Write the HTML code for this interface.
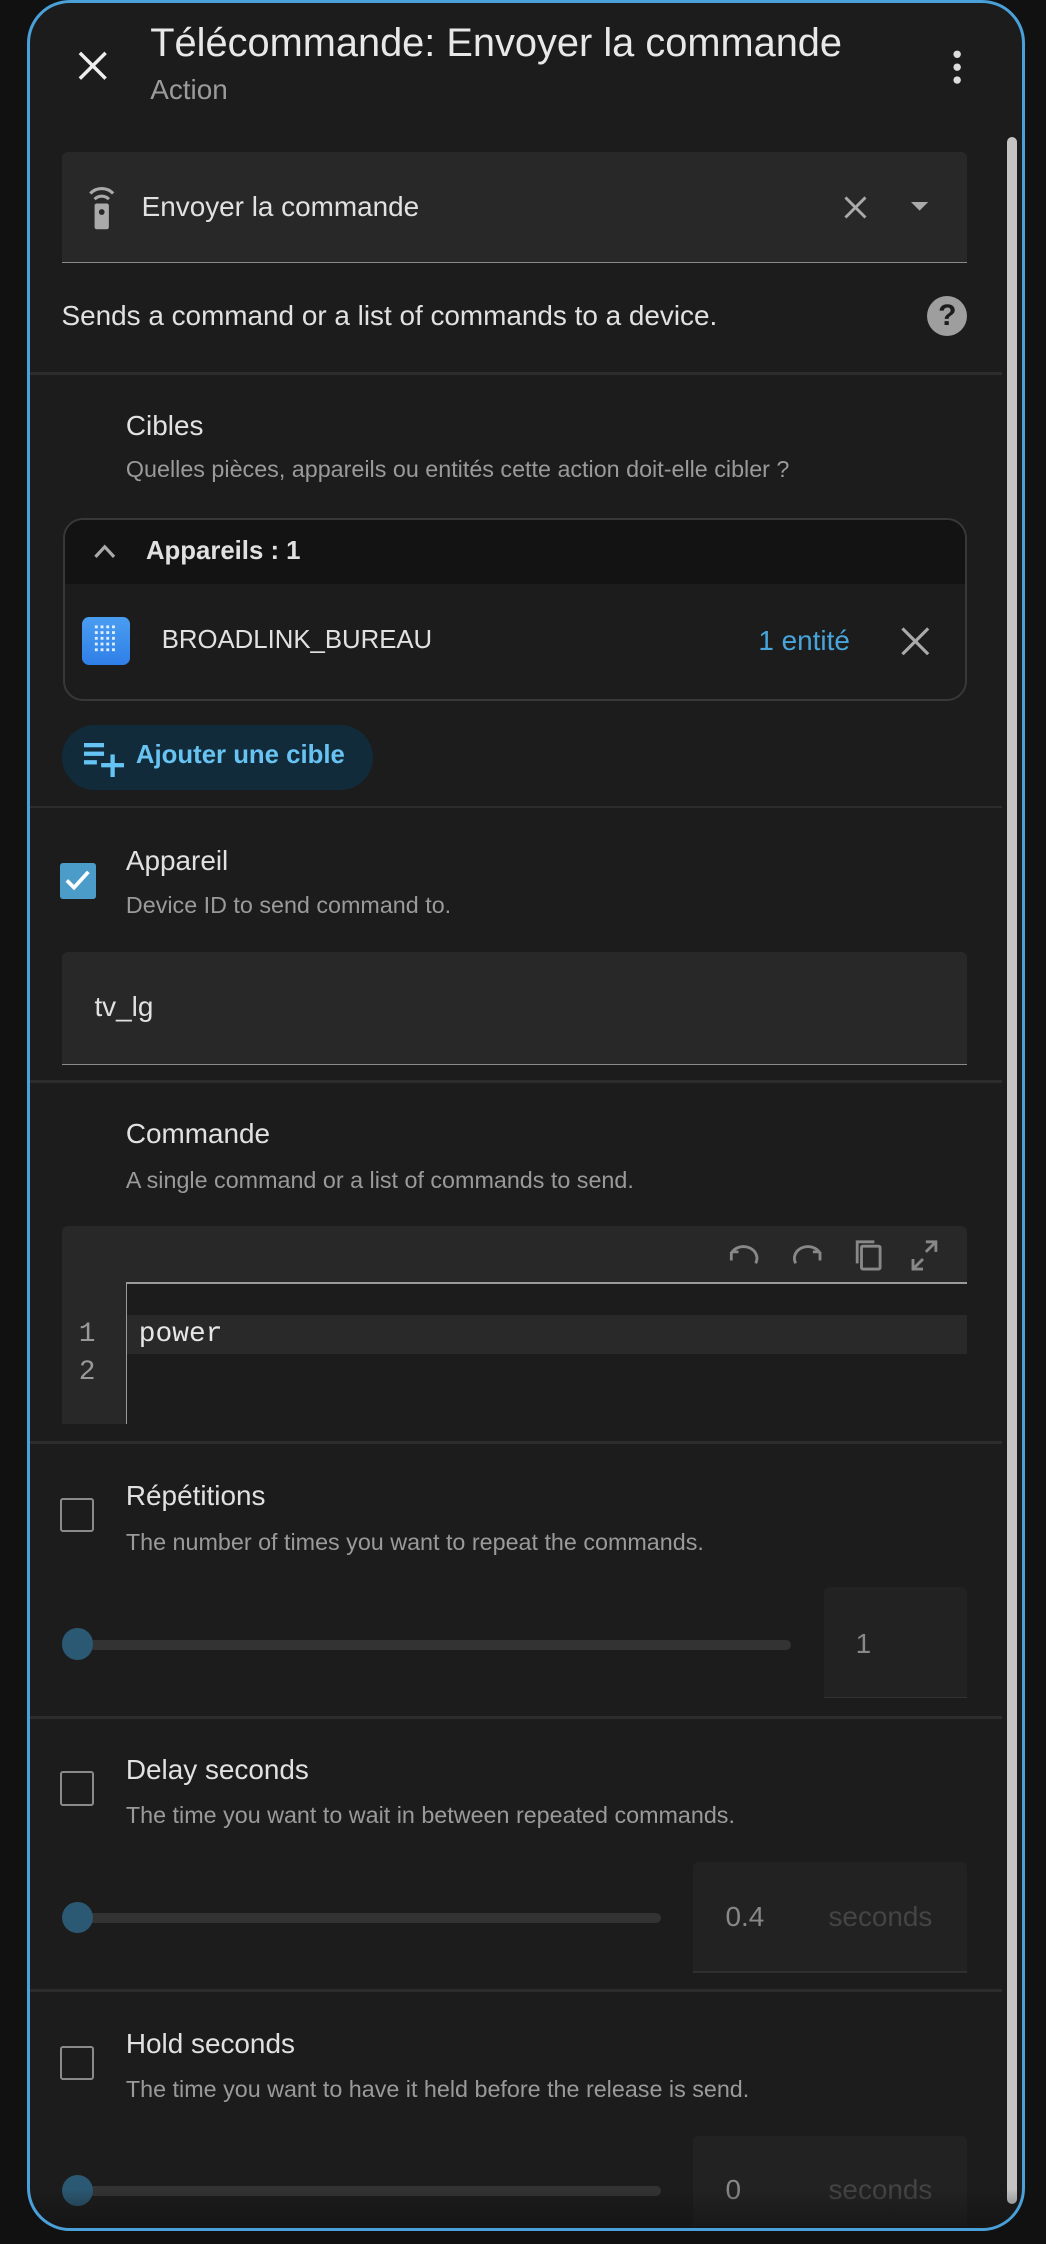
<!DOCTYPE html>
<html><head><meta charset="utf-8"><style>
html,body{margin:0;padding:0;background:#111;width:1046px;height:2244px;overflow:hidden}
#w{zoom:1.43091;width:731px;height:1568px;position:relative;font-family:"Liberation Sans",sans-serif;color:#e1e1e1}
.a{position:absolute}
.dlg{left:19px;top:0px;width:697px;height:1559px;border:2.5px solid #4aa0d8;border-radius:30px;background:#1c1c1c;box-sizing:border-box}
.t{font-size:19.5px;line-height:1;white-space:nowrap}
.s{font-size:16.3px;color:#9a9a9a;line-height:1;white-space:nowrap}
.hr{left:21px;width:679px;height:2px;background:#2c2c2c}
.fld{background:#282828;border-radius:4px 4px 0 0;border-bottom:1px solid #8a8a8a;box-sizing:border-box}
.cb{width:21px;height:21px;border:2px solid #8a8a8a;border-radius:2px}
.trk{height:7px;background:#333;border-radius:4px}
.th{width:22px;height:22px;border-radius:50%;background:#2b5872}
</style></head><body><div id="w">
<div class="a dlg"></div>
<div class="a" style="left:704px;top:96px;width:7px;height:1444px;background:#c4c4c4;border-radius:4px"></div>
<svg class="a" style="left:54px;top:35px" width="22" height="22" viewBox="0 0 22 22"><path d="M2 2L20 20M20 2L2 20" stroke="#eee" stroke-width="2.4"/></svg>
<div class="a t" style="left:105px;top:17px;font-size:27.8px;color:#e8e8e8">Télécommande: Envoyer la commande</div>
<div class="a t" style="left:105px;top:53px;color:#9b9b9b">Action</div>
<svg class="a" style="left:664px;top:35px" width="10" height="24"><circle cx="5" cy="3" r="2.6" fill="#ddd"/><circle cx="5" cy="12" r="2.6" fill="#ddd"/><circle cx="5" cy="21" r="2.6" fill="#ddd"/></svg>

<div class="a fld" style="left:43px;top:106px;width:633px;height:78px"></div>
<svg class="a" style="left:60px;top:127px" width="22" height="34" viewBox="0 0 22 34"><path d="M3 8a11 11 0 0 1 16 0M6 12a7 7 0 0 1 10 0" stroke="#aaa" stroke-width="2.2" fill="none"/><rect x="6" y="15" width="10" height="18" rx="1.5" fill="#aaa"/><circle cx="11" cy="21" r="2" fill="#282828"/></svg>
<div class="a t" style="left:99px;top:135px">Envoyer la commande</div>
<svg class="a" style="left:590px;top:137px" width="16" height="16"><path d="M1 1L15 15M15 1L1 15" stroke="#aaa" stroke-width="2"/></svg>
<svg class="a" style="left:637px;top:141px" width="12" height="7"><path d="M0 0H12L6 6Z" fill="#aaa"/></svg>
<div class="a t" style="left:43px;top:211px">Sends a command or a list of commands to a device.</div>
<div class="a" style="left:648px;top:207px;width:28px;height:28px;border-radius:50%;background:#9e9e9e;color:#1c1c1c;font-weight:bold;font-size:21px;text-align:center;line-height:28px">?</div>
<div class="a hr" style="top:260px"></div>

<div class="a t" style="left:88px;top:288px">Cibles</div>
<div class="a s" style="left:88px;top:320px">Quelles pièces, appareils ou entités cette action doit-elle cibler ?</div>
<div class="a" style="left:44px;top:362px;width:632px;height:128px;border:2px solid #383838;border-radius:14px;box-sizing:border-box;overflow:hidden"><div style="height:45px;background:#131313"></div></div>
<svg class="a" style="left:66px;top:380px" width="15" height="10"><path d="M1 9L7.5 2L14 9" stroke="#aaa" stroke-width="2.2" fill="none"/></svg>
<div class="a t" style="left:102px;top:377px;font-weight:bold;font-size:18px">Appareils : 1</div>
<div class="a" style="left:57px;top:431px;width:34px;height:34px;border-radius:5px;background:linear-gradient(#4a9ef0,#2f7fe8)"></div>
<svg class="a" style="left:64px;top:436px" width="20" height="24"><g fill="#dfefff"><rect x="2" y="1" width="2" height="2"/><rect x="6" y="1" width="2" height="2"/><rect x="10" y="1" width="2" height="2"/><rect x="14" y="1" width="2" height="2"/><rect x="2" y="5" width="2" height="2"/><rect x="6" y="5" width="2" height="2"/><rect x="10" y="5" width="2" height="2"/><rect x="14" y="5" width="2" height="2"/><rect x="2" y="9" width="2" height="2"/><rect x="6" y="9" width="2" height="2"/><rect x="10" y="9" width="2" height="2"/><rect x="14" y="9" width="2" height="2"/><rect x="2" y="13" width="2" height="2"/><rect x="6" y="13" width="2" height="2"/><rect x="10" y="13" width="2" height="2"/><rect x="14" y="13" width="2" height="2"/><rect x="2" y="17" width="2" height="2"/><rect x="6" y="17" width="2" height="2"/><rect x="10" y="17" width="2" height="2"/><rect x="14" y="17" width="2" height="2"/></g></svg>
<div class="a t" style="left:113px;top:439px;font-size:18px">BROADLINK_BUREAU</div>
<div class="a t" style="left:530px;top:438px;color:#47a5dc">1 entité</div>
<svg class="a" style="left:630px;top:438px" width="20" height="20"><path d="M1 1L19 19M19 1L1 19" stroke="#aaa" stroke-width="2.2"/></svg>
<div class="a" style="left:43px;top:507px;width:218px;height:45px;border-radius:23px;background:#112b3b"></div>
<svg class="a" style="left:59px;top:519px" width="28" height="24"><g fill="#66c4f4"><rect x="0" y="0" width="14" height="3"/><rect x="0" y="6" width="14" height="3"/><rect x="0" y="12" width="9" height="3"/><rect x="12" y="14" width="16" height="3"/><rect x="18.5" y="8" width="3" height="16"/></g></svg>
<div class="a t" style="left:95px;top:519px;color:#68c3f2;font-weight:bold;font-size:18px">Ajouter une cible</div>
<div class="a hr" style="top:563px"></div>

<div class="a" style="left:42px;top:603px;width:25px;height:25px;border-radius:2px;background:#4b9cc8"></div>
<svg class="a" style="left:45px;top:607px" width="19" height="16"><path d="M2 8L7 13L17 2" stroke="#fff" stroke-width="2.6" fill="none"/></svg>
<div class="a t" style="left:88px;top:592px">Appareil</div>
<div class="a s" style="left:88px;top:625px">Device ID to send command to.</div>
<div class="a fld" style="left:43px;top:665px;width:633px;height:79px"></div>
<div class="a t" style="left:66px;top:694px">tv_lg</div>
<div class="a hr" style="top:755px"></div>

<div class="a t" style="left:88px;top:783px">Commande</div>
<div class="a s" style="left:88px;top:817px">A single command or a list of commands to send.</div>
<div class="a" style="left:43px;top:857px;width:633px;height:39px;background:#282828;border-radius:4px 4px 0 0"></div>
<div class="a" style="left:43px;top:896px;width:45px;height:99px;background:#282828"></div>
<div class="a" style="left:88px;top:896px;width:588px;height:1px;background:#9a9a9a"></div>
<div class="a" style="left:88px;top:896px;width:1px;height:99px;background:#9a9a9a"></div>
<div class="a" style="left:89px;top:919px;width:587px;height:27px;background:#292929"></div>
<div class="a" style="left:55px;top:920px;font-family:'Liberation Mono',monospace;font-size:19.5px;color:#999;line-height:26px">1<br>2</div>
<div class="a" style="left:97px;top:920px;font-family:'Liberation Mono',monospace;font-size:19.5px;color:#e6e6e6;line-height:26px">power</div>
<svg class="a" style="left:508px;top:866px" width="160" height="22" viewBox="0 0 160 22"><g stroke="#888" stroke-width="2" fill="none"><path d="M3 15V9M3 9h5M3 10a8 7 0 0 1 17 7"/><path d="M65 15V9M65 9h-5M65 10a8 7 0 0 0 -17 7"/><rect x="94" y="5" width="13" height="16" rx="1"/><path d="M91 17V2h12"/><path d="M139 2h7v7M146 2l-7 7M137 21h-7v-7M130 21l7-7"/></g></svg>
<div class="a hr" style="top:1007px"></div>

<div class="a cb" style="left:42px;top:1047px"></div>
<div class="a t" style="left:88px;top:1036px">Répétitions</div>
<div class="a s" style="left:88px;top:1070px">The number of times you want to repeat the commands.</div>
<div class="a trk" style="left:54px;top:1146px;width:499px"></div>
<div class="a th" style="left:43px;top:1138px"></div>
<div class="a" style="left:576px;top:1109px;width:100px;height:78px;background:#222;border-bottom:1px solid #333;box-sizing:border-box;border-radius:4px 4px 0 0"></div>
<div class="a t" style="left:598px;top:1139px;color:#888">1</div>
<div class="a hr" style="top:1199px"></div>

<div class="a cb" style="left:42px;top:1238px"></div>
<div class="a t" style="left:88px;top:1227px">Delay seconds</div>
<div class="a s" style="left:88px;top:1261px">The time you want to wait in between repeated commands.</div>
<div class="a trk" style="left:54px;top:1337px;width:408px"></div>
<div class="a th" style="left:43px;top:1329px"></div>
<div class="a" style="left:484px;top:1301px;width:192px;height:78px;background:#222;border-bottom:2px solid #2f2f2f;box-sizing:border-box;border-radius:4px 4px 0 0"></div>
<div class="a t" style="left:507px;top:1330px;color:#888">0.4</div>
<div class="a t" style="left:579px;top:1330px;color:#444">seconds</div>
<div class="a hr" style="top:1390px"></div>

<div class="a cb" style="left:42px;top:1430px"></div>
<div class="a t" style="left:88px;top:1419px">Hold seconds</div>
<div class="a s" style="left:88px;top:1452px">The time you want to have it held before the release is send.</div>
<div class="a trk" style="left:54px;top:1528px;width:408px"></div>
<div class="a th" style="left:43px;top:1520px"></div>
<div class="a" style="left:484px;top:1493px;width:192px;height:63px;background:#222;border-radius:4px 4px 0 0"></div>
<div class="a t" style="left:507px;top:1521px;color:#888">0</div>
<div class="a t" style="left:579px;top:1521px;color:#444">seconds</div>
<div class="a" style="left:22px;top:1530px;width:692px;height:27px;background:linear-gradient(rgba(17,17,17,0),rgba(17,17,17,.6));border-radius:0 0 28px 28px"></div>
</div></body></html>
